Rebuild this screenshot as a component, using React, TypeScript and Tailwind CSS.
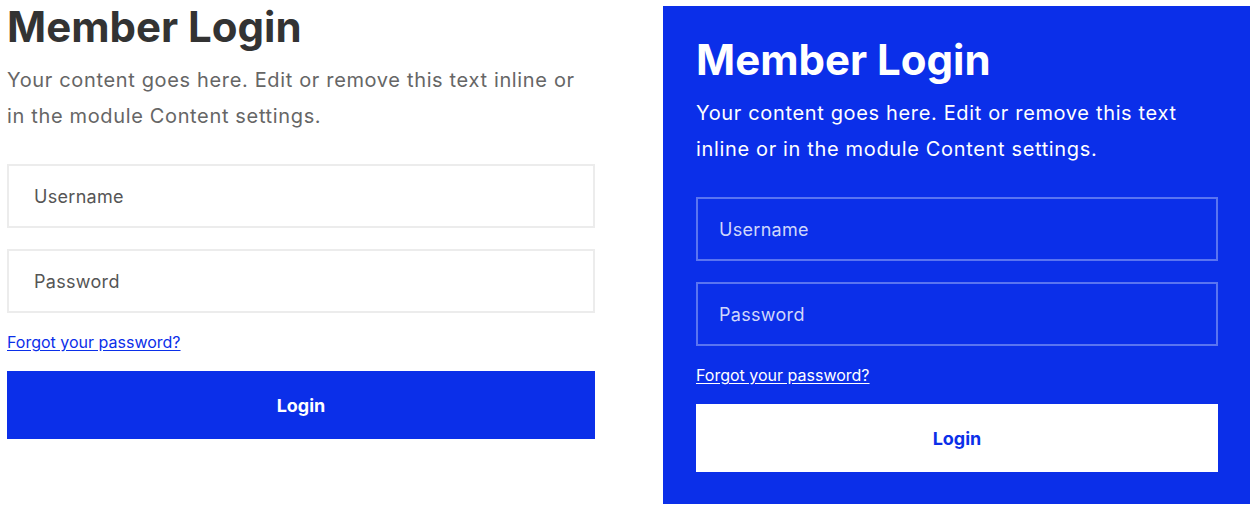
import React from "react";

function LoginForm({ variant }: { variant: "light" | "dark" }) {
  const dark = variant === "dark";
  return (
    <div>
      <h1
        className={`text-[42px] leading-[42px] font-bold ${
          dark ? "text-white" : "text-[#333333]"
        }`}
      >
        Member Login
      </h1>
      <p
        className={`mt-[14px] text-[20px] leading-[36px] tracking-[0.65px] ${
          dark ? "text-white" : "text-[#666666]"
        }`}
      >
        Your content goes here. Edit or remove this text inline or in the module Content settings.
      </p>
      <div className="mt-[30px] flex flex-col gap-[21px]">
        {["Username", "Password"].map((label) => (
          <input
            key={label}
            type={label === "Password" ? "password" : "text"}
            placeholder={label}
            className={`h-[64px] w-full border-2 text-[18px] tracking-[0.3px] outline-none ${
              dark
                ? "border-[#5a74f1] bg-transparent pl-[21px] placeholder:text-[#cfd7fb] text-white"
                : "border-[#ececec] bg-white pl-[25px] placeholder:text-[#555555] text-[#555555]"
            }`}
          />
        ))}
      </div>
      <div className="mt-[17px] h-[24px] text-[16px] leading-[24px]">
        <a
          href="#"
          className={`underline underline-offset-2 ${dark ? "text-white" : "text-[#0b2fe9]"}`}
        >
          Forgot your password?
        </a>
      </div>
      <button
        className={`mt-[17px] h-[68px] w-full text-[18px] font-bold ${
          dark ? "bg-white text-[#0b2fe9]" : "bg-[#0b2fe9] text-white"
        }`}
      >
        Login
      </button>
    </div>
  );
}

export default function App() {
  return (
    <div
      className="flex min-h-[510px] items-start bg-white pl-[7px] pt-[6px]"
      style={{ fontFamily: "Inter, 'Noto Sans', sans-serif" }}
    >
      <div className="w-[588px] shrink-0">
        <LoginForm variant="light" />
      </div>
      <div className="ml-[68px] w-[587px] shrink-0 bg-[#0b2fe9] pb-[32px] pl-[33px] pr-[32px] pt-[33px]">
        <LoginForm variant="dark" />
      </div>
    </div>
  );
}
